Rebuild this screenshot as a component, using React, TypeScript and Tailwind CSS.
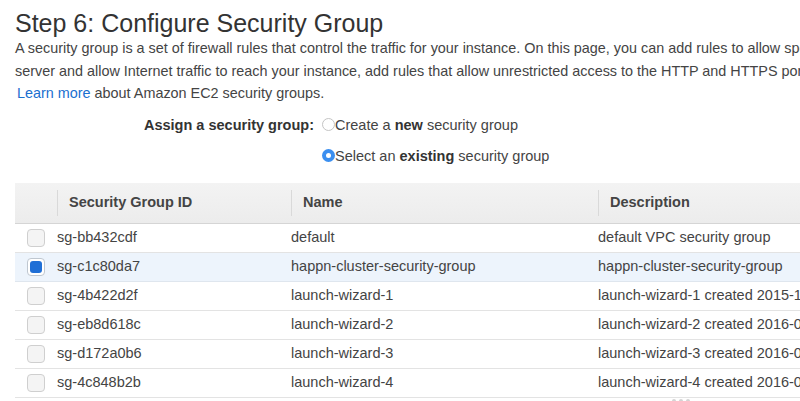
import React, { useState } from "react";

type Group = { id: string; name: string; desc: string };

const groups: Group[] = [
  { id: "sg-bb432cdf", name: "default", desc: "default VPC security group" },
  { id: "sg-c1c80da7", name: "happn-cluster-security-group", desc: "happn-cluster-security-group" },
  { id: "sg-4b422d2f", name: "launch-wizard-1", desc: "launch-wizard-1 created 2015-11-04T10:12:33.915+01:00" },
  { id: "sg-eb8d618c", name: "launch-wizard-2", desc: "launch-wizard-2 created 2016-02-11T14:02:18.442+01:00" },
  { id: "sg-d172a0b6", name: "launch-wizard-3", desc: "launch-wizard-3 created 2016-03-01T09:41:55.120+01:00" },
  { id: "sg-4c848b2b", name: "launch-wizard-4", desc: "launch-wizard-4 created 2016-04-19T16:27:07.381+01:00" },
];

function Radio({ checked }: { checked: boolean }) {
  return checked ? (
    <span className="inline-flex h-[13px] w-[13px] shrink-0 items-center justify-center rounded-full bg-[#3b8ff0]">
      <span className="h-[5px] w-[5px] rounded-full bg-white" />
    </span>
  ) : (
    <span className="inline-block h-[13px] w-[13px] shrink-0 rounded-full border border-[#c4c4c4] bg-white" />
  );
}

export default function App() {
  const [mode, setMode] = useState<"new" | "existing">("existing");
  const [selected, setSelected] = useState("sg-c1c80da7");

  return (
    <div className="h-[401px] w-[800px] overflow-hidden bg-white font-['Liberation_Sans',Arial,sans-serif] text-[#444]">
      {/* titre */}
      <h1 className="ml-[15px] mt-[8px] whitespace-nowrap text-[25px] leading-[30px] text-[#333]">
        Step 6: Configure Security Group
      </h1>

      <div className="ml-[15px] mt-[-1px] whitespace-nowrap text-[14.4px] leading-[22.5px]">
        <p>A security group is a set of firewall rules that control the traffic for your instance. On this page, you can add rules to allow specific traffic to reach your instance. For example, if you want to set up a web</p>
        <p>server and allow Internet traffic to reach your instance, add rules that allow unrestricted access to the HTTP and HTTPS ports.</p>
        <p className="ml-[2px]">
          <a className="text-[#1a6fcf]">Learn more</a> about Amazon EC2 security groups.
        </p>
      </div>

      {/* choix du groupe */}
      <div className="mt-[10px] flex text-[14.5px] leading-[20px]">
        <div className="w-[322px] shrink-0 pr-[8px] text-right font-bold text-[#333]">Assign a security group:</div>
        <div className="flex flex-col gap-[11px]">
          <label className="flex cursor-pointer items-center" onClick={() => setMode("new")}>
            <Radio checked={mode === "new"} />
            <span>Create a <b className="text-[#333]">new</b> security group</span>
          </label>
          <label className="flex cursor-pointer items-center" onClick={() => setMode("existing")}>
            <Radio checked={mode === "existing"} />
            <span>Select an <b className="text-[#333]">existing</b> security group</span>
          </label>
        </div>
      </div>

      {/* tableau */}
      <div className="ml-[15px] mt-[17px] w-[800px] text-[14.5px]">
        <div className="flex h-[41px] items-center border-b border-[#d5d5d5] bg-gradient-to-b from-[#f3f3f3] to-[#ececec] font-bold text-[#444]">
          <div className="h-[26px] w-[42px] shrink-0" />
          <div className="flex h-[26px] w-[234px] shrink-0 items-center border-l border-[#d9d9d9] pl-[11px]">Security Group ID</div>
          <div className="flex h-[26px] w-[307px] shrink-0 items-center border-l border-[#d9d9d9] pl-[11px]">Name</div>
          <div className="flex h-[26px] flex-1 items-center border-l border-[#d9d9d9] pl-[11px]">Description</div>
        </div>
        {groups.map((g) => {
          const on = g.id === selected;
          return (
            <div
              key={g.id}
              onClick={() => setSelected(g.id)}
              className={`flex h-[29px] cursor-pointer items-center whitespace-nowrap border-b ${
                on ? "border-[#dfe6ee] bg-[#edf4fc]" : "border-[#e3e3e3] bg-white"
              }`}
            >
              <div className="flex w-[42px] shrink-0 justify-center">
                {on ? (
                  <span className="flex h-[18px] w-[18px] items-center justify-center rounded-[4px] border border-[#bfc7d0] bg-white">
                    <span className="h-[12px] w-[12px] rounded-[3px] bg-[#1f6fd6]" />
                  </span>
                ) : (
                  <span className="h-[18px] w-[18px] rounded-[4px] border border-[#cfcfcf] bg-[#f4f4f4]" />
                )}
              </div>
              <div className="w-[234px] shrink-0">{g.id}</div>
              <div className="w-[307px] shrink-0">{g.name}</div>
              <div className="flex-1 overflow-hidden">{g.desc}</div>
            </div>
          );
        })}
      </div>

      {/* poignée de redimensionnement */}
      <div className="ml-[672px] mt-[1px] flex gap-[3px]">
        <span className="h-[4px] w-[4px] rounded-full bg-[#d4d4d4]" />
        <span className="h-[4px] w-[4px] rounded-full bg-[#d4d4d4]" />
        <span className="h-[4px] w-[4px] rounded-full bg-[#d4d4d4]" />
      </div>
    </div>
  );
}
